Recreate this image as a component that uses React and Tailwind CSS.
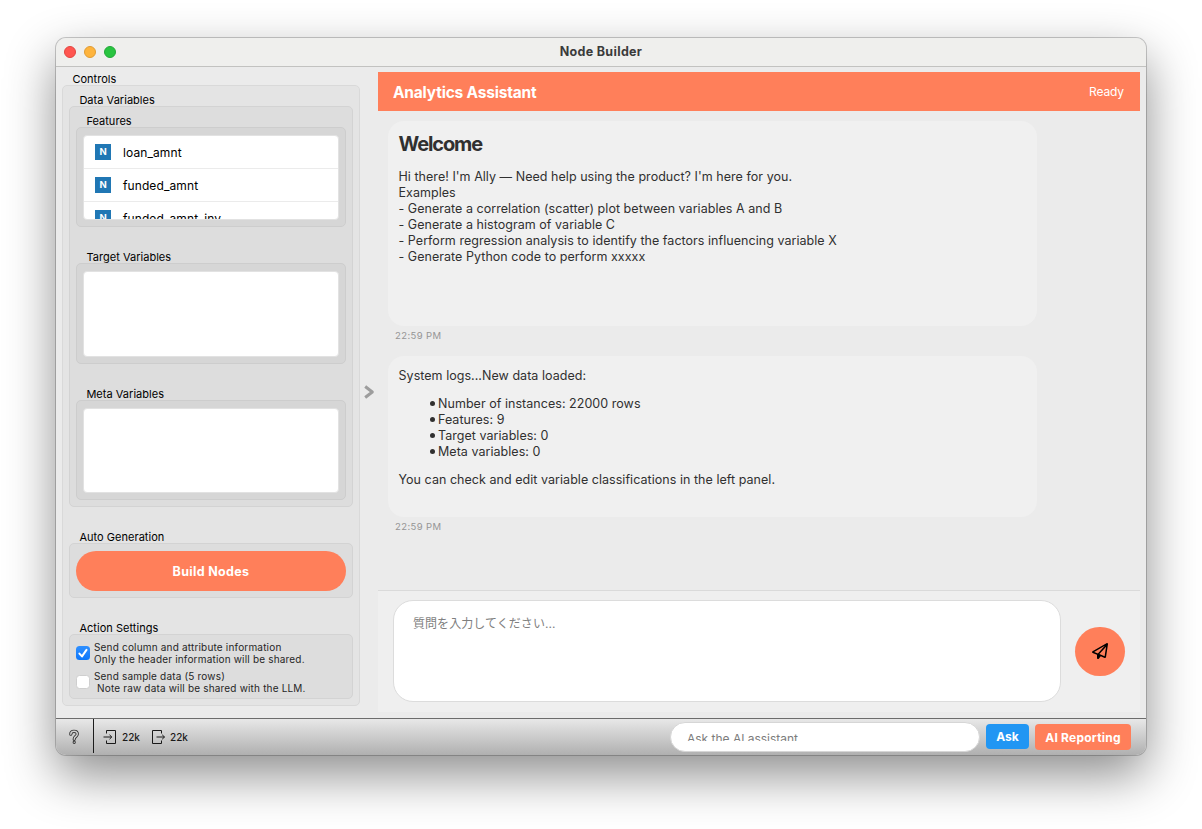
import React from "react";
import { FaRegPaperPlane } from "react-icons/fa6";

function GroupBox({ label, className = "", boxClass = "", children }) {
  return (
    <section className={`flex flex-col ${className}`}>
      <h2 className="h-[13px] pl-[10.4px] text-[11px] leading-[15px] tracking-[0.03px] whitespace-nowrap text-black">
        {label}
      </h2>
      <div className={`flex flex-col rounded-[5px] border ${boxClass}`}>{children}</div>
    </section>
  );
}

const INNER_BOX = "border-[#cdcdcd] bg-[#d6d6d6] px-[6px] pt-[7px]";
const MIDDLE_BOX = "border-[#d3d3d3] bg-[#dddddd] px-[6px]";

function Feature({ name }) {
  return (
    <li className="flex h-[33px] shrink-0 items-center border-b border-[#ebebeb] pl-[11px]">
      <span className="flex size-4 items-center justify-center bg-[#2077b4] pb-px text-[9.5px] leading-none font-bold text-white">
        N
      </span>
      <span className="ml-[12px] pt-[2px] text-[12px] leading-[16px] tracking-[0.1px] text-black">{name}</span>
    </li>
  );
}

function CheckRow({ checked, first, second, secondClass = "" }) {
  return (
    <label className="flex h-6 items-center">
      {checked ? (
        <span className="flex size-[14px] items-center justify-center rounded-[3.5px] bg-linear-to-b from-[#2f90ff] to-[#0a77fb]">
          <svg viewBox="0 0 14 14" className="size-[14px]" fill="none" stroke="white" strokeWidth="2" strokeLinecap="round" strokeLinejoin="round">
            <path d="M3.4 7.6 6 10.4 10.5 3.9" />
          </svg>
        </span>
      ) : (
        <span className="size-[14px] rounded-[3.5px] border border-[#cfcfcf] bg-white" />
      )}
      <span className="ml-[4px] flex flex-col text-[10px] leading-[12px] tracking-[0.18px] whitespace-nowrap text-[#262626]">
        <span>{first}</span>
        <span className={secondClass}>{second}</span>
      </span>
    </label>
  );
}

function Sidebar() {
  return (
    <aside className="flex w-[298px] shrink-0 flex-col">
      <GroupBox label="Controls" boxClass="h-[621px] border-[#d9d9d9] bg-[#e4e4e4] px-[6px] pt-[7px]">
        <GroupBox label="Data Variables" boxClass={`h-[401px] pt-[7px] ${MIDDLE_BOX}`}>
          <GroupBox label="Features" boxClass={`h-[100px] ${INNER_BOX}`}>
            <ul className="flex h-[85px] flex-col overflow-hidden rounded-[4px] border border-[#e2e2e2] bg-white">
              <Feature name="loan_amnt" />
              <Feature name="funded_amnt" />
              <Feature name="funded_amnt_inv" />
            </ul>
          </GroupBox>
          <GroupBox label="Target Variables" className="mt-[23px]" boxClass={`h-[101px] ${INNER_BOX}`}>
            <div className="h-[86px] rounded-[4px] border border-[#e2e2e2] bg-white" />
          </GroupBox>
          <GroupBox label="Meta Variables" className="mt-[23px]" boxClass={`h-[100px] ${INNER_BOX}`}>
            <div className="h-[85px] rounded-[4px] border border-[#e2e2e2] bg-white" />
          </GroupBox>
        </GroupBox>
        <GroupBox label="Auto Generation" className="mt-[23px]" boxClass={`h-[55px] pt-[7px] ${MIDDLE_BOX}`}>
          <button className="h-10 rounded-full bg-[#ff7f5a] pt-[3px] text-[12.5px] font-bold tracking-[0.33px] text-white">
            Build Nodes
          </button>
        </GroupBox>
        <GroupBox label="Action Settings" className="mt-[23px]" boxClass={`h-[65px] gap-[5px] pt-[6px] ${MIDDLE_BOX}`}>
          <CheckRow checked first="Send column and attribute information" second="Only the header information will be shared." />
          <CheckRow first="Send sample data (5 rows)" second="Note raw data will be shared with the LLM." secondClass="pl-[3px]" />
        </GroupBox>
      </GroupBox>
    </aside>
  );
}

function Message({ className, time, children }) {
  return (
    <article className="flex flex-col">
      <div className={`w-[649px] rounded-[16px] bg-[#f0f0f0] pr-[10px] pl-[10.5px] pt-[12px] text-[12.5px] leading-[16px] tracking-[0.04px] whitespace-nowrap text-[#303030] ${className}`}>
        {children}
      </div>
      <time className="mt-[3px] h-[13px] pl-[7px] text-[9.5px] leading-[13px] tracking-[0.4px] text-[#959595]">{time}</time>
    </article>
  );
}

function Chat() {
  return (
    <main className="flex w-[762px] shrink-0 flex-col">
      <header className="flex h-[39px] items-center justify-between bg-[#ff7f5a] pr-4 pl-[15px] text-white">
        <h1 className="pt-[3px] text-[15.5px] leading-[20px] font-bold tracking-[-0.2px]">Analytics Assistant</h1>
        <span className="text-[12px] tracking-[-0.1px]">Ready</span>
      </header>
      <div className="flex h-[479px] flex-col gap-[14px] pt-[10px] pl-[10px]">
        <Message className="h-[205px]" time="22:59 PM">
          <h2 className="-mt-px mb-[13px] text-[20px] leading-[24px] font-bold tracking-[-1.1px]">Welcome</h2>
          <p>Hi there! I'm Ally — Need help using the product? I'm here for you.</p>
          <p>Examples</p>
          <p>- Generate a correlation (scatter) plot between variables A and B</p>
          <p>- Generate a histogram of variable C</p>
          <p>- Perform regression analysis to identify the factors influencing variable X</p>
          <p>- Generate Python code to perform xxxxx</p>
        </Message>
        <Message className="h-[161px]" time="22:59 PM">
          <p>System logs...New data loaded:</p>
          <ul className="my-[12px] flex flex-col pl-[31.5px]">
            {["Number of instances: 22000 rows", "Features: 9", "Target variables: 0", "Meta variables: 0"].map((line) => (
              <li key={line} className="flex items-center">
                <span className="mr-[3px] mb-[2px] size-[5px] rounded-full bg-[#303030]" />
                {line}
              </li>
            ))}
          </ul>
          <p>You can check and edit variable classifications in the left panel.</p>
        </Message>
      </div>
      <form className="flex h-[122px] border-t border-[#dadada] bg-[#efefef] pt-[9px] pl-[15px]">
        <div className="h-[102px] w-[668px] rounded-[20px] border border-[#dcdcdc] bg-white pt-[14px] pl-[19px] font-['Inter','Noto_Sans_CJK_JP',sans-serif] text-[12px] leading-[17px] tracking-[0.06px] text-[#7f7f7f]">
          質問を入力してください...
        </div>
        <button type="button" className="mt-[26.5px] ml-[14px] flex h-[49.5px] w-[50px] items-center justify-center rounded-full bg-[#ff7f5a] text-black">
          <FaRegPaperPlane className="size-4" />
        </button>
      </form>
    </main>
  );
}

function Footer() {
  return (
    <footer className="flex h-[37px] shrink-0 items-start border-t border-[#6c6c6c] bg-linear-to-b from-[#e8e8e8] to-[#b0b0b0] text-[#1a1a1a]">
      <div className="flex h-[34px] w-[38px] items-center justify-center border-r border-[#1c1c1c] pr-px">
        <svg viewBox="0 0 12 16" className="mt-[2px] mr-px h-4 w-3" fill="none" strokeLinecap="round">
          <path d="M2.8 5.2C2.8 3.2 4.2 2.3 6 2.3s3.3 1 3.3 2.8C9.3 7.5 6.2 7.3 6.2 10.2M6.2 13.2v.1" stroke="#333" strokeWidth="3.2" />
          <path d="M2.8 5.2C2.8 3.2 4.2 2.3 6 2.3s3.3 1 3.3 2.8C9.3 7.5 6.2 7.3 6.2 10.2M6.2 13.2v.1" stroke="#d0d0d0" strokeWidth="1.4" />
        </svg>
      </div>
      <div className="flex h-[36px] items-center pl-[9px] text-[10px] font-medium">
        <svg viewBox="0 0 14 14" className="h-[14px] w-[14px]" fill="none" stroke="currentColor">
          <path d="M3.5 3.5v-3h9v13h-9v-3" />
          <path d="M.5 7h8M6.5 4.8 8.8 7 6.5 9.2" />
        </svg>
        <span className="ml-[5px] w-[18px] pt-px">22k</span>
        <svg viewBox="0 0 14 14" className="ml-[12px] h-[14px] w-[14px]" fill="none" stroke="currentColor">
          <path d="M9.5 3.5v-3h-9v13h9v-3" />
          <path d="M4.5 7h8M10.2 4.8 12.5 7l-2.3 2.2" />
        </svg>
        <span className="ml-[4px] pt-px">22k</span>
      </div>
      <div className="mt-[3px] ml-auto h-[30px] w-[310px] rounded-full border border-[#d6d6d6] bg-white pt-[8px] pl-[16px]">
        <div className="h-[10px] overflow-hidden text-[12px] leading-[16px] tracking-[-0.01px] text-[#7c7c7c]">Ask the AI assistant</div>
      </div>
      <button className="mt-[5px] ml-[6px] h-[25px] w-[43px] rounded-[4px] bg-[#2196f3] text-[12px] font-bold text-white">Ask</button>
      <button className="mt-[5px] mr-[15px] ml-[6px] h-[26px] w-[96px] rounded-[4px] bg-[#ff7f5a] pt-px text-[12px] font-bold tracking-[0.22px] text-white">
        AI Reporting
      </button>
    </footer>
  );
}

export default function App() {
  return (
    <div className="h-[829px] w-[1202px] overflow-hidden bg-white pt-[38px] pl-[56px] font-['Inter','Noto_Sans_CJK_JP',sans-serif]">
      <div className="flex h-[717px] w-[1090px] flex-col overflow-hidden rounded-[10px] bg-[#ebebeb] shadow-[0_0_0_1px_rgba(0,0,0,0.2),0_20px_50px_rgba(0,0,0,0.45)]">
        <div className="grid h-[29px] shrink-0 grid-cols-[1fr_auto_1fr] items-center border-b border-[#c2c2c0] bg-[#efefed]">
          <div className="flex gap-2 pl-2">
            <span className="size-3 rounded-full border border-[#e24640] bg-[#ff5650]" />
            <span className="size-3 rounded-full border border-[#e09c33] bg-[#feb43d]" />
            <span className="size-3 rounded-full border border-[#24a839] bg-[#29c440]" />
          </div>
          <div className="pb-px text-[12.5px] leading-[16px] font-bold tracking-[0.32px] text-[#3b3b3b]">Node Builder</div>
          <div />
        </div>
        <div className="flex h-[651px] shrink-0 px-[6px] pt-[5px]">
          <Sidebar />
          <div className="flex w-[18px] shrink-0 items-center pb-[6px] pl-1">
            <svg viewBox="0 0 11 14" className="h-[14px] w-[11px]" fill="none" stroke="#9d9d9d" strokeWidth="3">
              <path d="M1.2 1.5 8.3 7l-7.1 5.5" strokeLinejoin="round" />
            </svg>
          </div>
          <Chat />
        </div>
        <Footer />
      </div>
    </div>
  );
}
